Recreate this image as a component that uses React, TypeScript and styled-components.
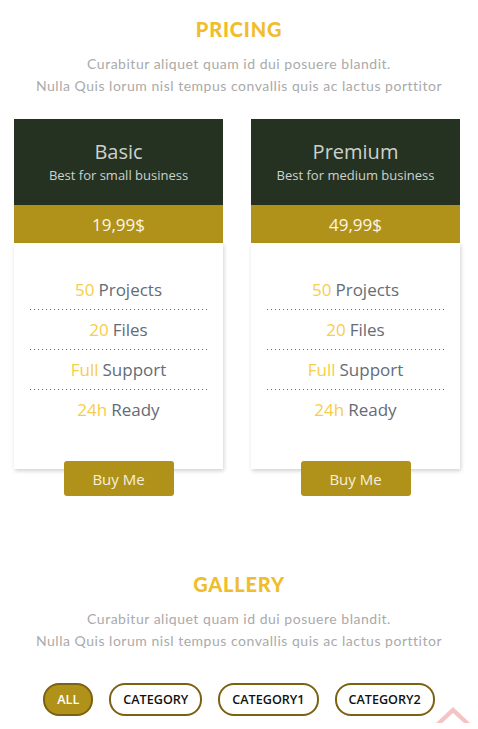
import React from 'react'
import styled, { createGlobalStyle } from 'styled-components'

const Global = createGlobalStyle`
  body {
    margin: 0;
    background: #fff;
    font-family: 'Open Sans', sans-serif;
  }
`

const Page = styled.div`
  width: 478px;
  overflow: hidden;
`

const Section = styled.section<{ $top: number }>`
  padding-top: ${(p) => p.$top}px;
  display: flex;
  flex-direction: column;
  align-items: center;
`

const Title = styled.h2`
  margin: 0;
  font-family: 'Lato', sans-serif;
  font-weight: 900;
  font-size: 20px;
  line-height: 24px;
  letter-spacing: 0.8px;
  color: #f0bd2d;
`

const Lead = styled.p`
  margin: 12px 0 0;
  font-family: 'Lato', sans-serif;
  font-size: 14px;
  line-height: 22px;
  letter-spacing: 0.52px;
  color: #aaaaaa;
  text-align: center;
`

const Plans = styled.div`
  margin: 22px 4px 0 0;
  display: grid;
  grid-template-columns: 209px 209px;
  gap: 28px;
`

const Plan = styled.div`
  display: flex;
  flex-direction: column;
  align-items: center;
`

const PlanHead = styled.div`
  align-self: stretch;
  height: 86px;
  background: #253222;
  color: #cdd1cc;
  display: flex;
  flex-direction: column;
  align-items: center;
  justify-content: center;
  box-sizing: border-box;
`

const PlanName = styled.div`
  font-size: 20px;
  line-height: 26px;
`

const PlanNote = styled.div`
  font-size: 13px;
  line-height: 20px;
`

const Price = styled.div`
  align-self: stretch;
  height: 38px;
  background: #b0921a;
  color: #fbf6e6;
  font-size: 17px;
  display: flex;
  align-items: center;
  justify-content: center;
`

const PlanBody = styled.ul`
  align-self: stretch;
  margin: 0;
  padding: 26px 16px 40px;
  list-style: none;
  background: #fff;
  box-shadow: 1px 2px 4px rgba(0, 0, 0, 0.18);
`

const Feature = styled.li`
  height: 40px;
  display: flex;
  align-items: center;
  justify-content: center;
  font-size: 17px;
  color: #646c76;
  & + & {
    background: linear-gradient(to right, #666 1px, transparent 1px) top left / 4px 1px repeat-x;
  }
`

const Amount = styled.span`
  color: #f7cd4a;
  margin-right: 4px;
`

const BuyButton = styled.button`
  margin-top: -8px;
  width: 110px;
  height: 35px;
  border: none;
  border-radius: 3px;
  background: #b0921a;
  color: #f6f0dc;
  font-family: 'Open Sans', sans-serif;
  font-size: 15px;
  position: relative;
`

const Filters = styled.div`
  margin-top: 31px;
  display: flex;
  gap: 16px;
`

const Filter = styled.button<{ $active?: boolean }>`
  height: 33px;
  padding: 0 12px;
  border: 2px solid #7b6212;
  border-radius: 16px;
  background: ${(p) => (p.$active ? '#b0921a' : '#fff')};
  color: ${(p) => (p.$active ? '#fff' : '#111')};
  font-family: 'Open Sans', sans-serif;
  font-weight: 600;
  font-size: 12.6px;
`

const ToTop = styled.div`
  position: fixed;
  right: 8px;
  top: 707px;
  width: 34px;
  height: 22px;
`

const plans = [
  { name: 'Basic', note: 'Best for small business', price: '19,99$' },
  { name: 'Premium', note: 'Best for medium business', price: '49,99$' },
]

const features = [
  ['50', 'Projects'],
  ['20', 'Files'],
  ['Full', 'Support'],
  ['24h', 'Ready'],
]

const categories = ['ALL', 'CATEGORY', 'CATEGORY1', 'CATEGORY2']

export default function App() {
  return (
    <Page>
      <Global />
      <Section $top={17}>
        <Title>PRICING</Title>
        <Lead>
          Curabitur aliquet quam id dui posuere blandit.
          <br />
          Nulla Quis lorum nisl tempus convallis quis ac lactus porttitor
        </Lead>
        <Plans>
          {plans.map((p) => (
            <Plan key={p.name}>
              <PlanHead>
                <PlanName>{p.name}</PlanName>
                <PlanNote>{p.note}</PlanNote>
              </PlanHead>
              <Price>{p.price}</Price>
              <PlanBody>
                {features.map(([a, b]) => (
                  <Feature key={b}>
                    <Amount>{a}</Amount>
                    {b}
                  </Feature>
                ))}
              </PlanBody>
              <BuyButton>Buy Me</BuyButton>
            </Plan>
          ))}
        </Plans>
      </Section>
      <Section $top={76}>
        <Title>GALLERY</Title>
        <Lead>
          Curabitur aliquet quam id dui posuere blandit.
          <br />
          Nulla Quis lorum nisl tempus convallis quis ac lactus porttitor
        </Lead>
        <Filters>
          {categories.map((c, i) => (
            <Filter key={c} $active={i === 0}>
              {c}
            </Filter>
          ))}
        </Filters>
      </Section>
      <ToTop>
        <svg width="34" height="22" viewBox="0 0 34 22">
          <path d="M0 16 L17 0 L34 16 L28 16 L17 6 L6 16 Z" fill="#f4c4c4" />
        </svg>
      </ToTop>
    </Page>
  )
}
